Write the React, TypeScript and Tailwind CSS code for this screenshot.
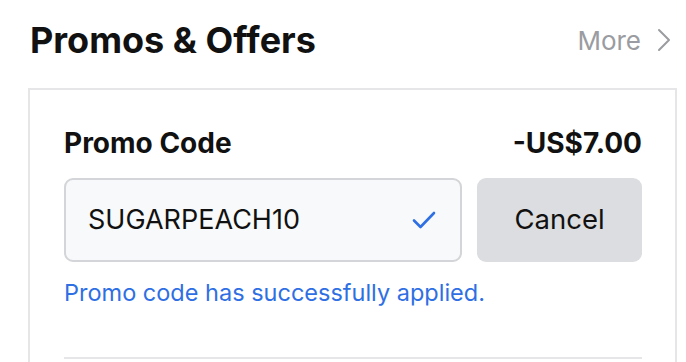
import React from "react";

const Check = () => (
  <svg width="24" height="18" viewBox="0 0 24 18" fill="none">
    <path d="M2 9.5 L8.5 16 L22 2" stroke="#2f6fe4" strokeWidth="2.6" strokeLinecap="round" strokeLinejoin="round" />
  </svg>
);

const Chevron = () => (
  <svg width="14" height="24" viewBox="0 0 14 24" fill="none">
    <path d="M2 2 L12 12 L2 22" stroke="#9a9ca1" strokeWidth="2" strokeLinecap="round" strokeLinejoin="round" />
  </svg>
);

const App = () => {
  return (
    <div className="w-[686px] h-[362px] overflow-hidden bg-white pl-[28px] pr-[9px] font-['Inter',sans-serif]">
      <div className="flex items-center justify-between pt-[16px] h-[88px] pb-[24px]">
        <h2 className="text-[36px] font-bold text-[#111] pl-[2px]">Promos &amp; Offers</h2>
        <div className="flex items-center gap-[16px] text-[26px] text-[#9a9ca1] pr-[6px]">
          <span>More</span>
          <Chevron />
        </div>
      </div>
      <div className="border-2 border-[#e6e6e9] pl-[34px] pr-[33px] pt-[36px] h-[300px]">
        <div className="flex items-center justify-between text-[28px] leading-[34px] font-bold text-[#111]">
          <span>Promo Code</span>
          <span>-US$7.00</span>
        </div>
        <div className="flex gap-[15px] mt-[18px]">
          <div className="flex-1 h-[84px] rounded-[9px] border-2 border-[#d4d5d8] bg-[#f8f9fa] flex items-center justify-between pl-[22px] pr-[24px]">
            <span className="text-[27px] text-[#111]">SUGARPEACH10</span>
            <Check />
          </div>
          <button className="w-[165px] h-[84px] rounded-[9px] bg-[#dcdde0] text-[27.5px] text-[#111]">Cancel</button>
        </div>
        <p className="mt-[16px] text-[23.5px] leading-[30px] text-[#2f6fe4]">Promo code has successfully applied.</p>
        <div className="mt-[49px] h-[2px] bg-[#e6e6e9]" />
      </div>
    </div>
  );
};

export default App;
